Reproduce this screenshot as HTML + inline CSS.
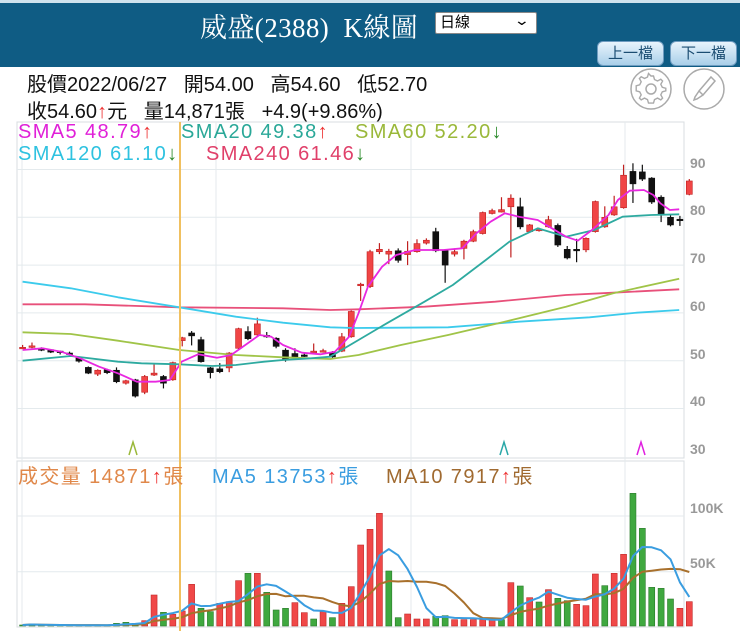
<!DOCTYPE html>
<html><head><meta charset="utf-8">
<style>
*{margin:0;padding:0;box-sizing:border-box}
body{width:740px;height:631px;background:#fff;position:relative;overflow:hidden;font-family:"Liberation Sans","Noto Sans CJK TC",sans-serif}
.top{position:absolute;left:0;top:0;width:740px;height:3px;background:#cfe3ee}
.hdr{position:absolute;left:0;top:3px;width:740px;height:64px;background:#0f5c84}
.title{position:absolute;left:200px;top:3px;font-family:"Liberation Serif","Noto Serif CJK SC",serif;color:#fff;font-size:27px;white-space:nowrap;letter-spacing:0.4px}
.sel{position:absolute;left:435px;top:9px;width:102px;height:22px;background:#fff;border:1px solid #888;border-radius:2px;font-size:15px;padding-left:4px;line-height:20px;color:#000}
.sel span{position:absolute;right:8px;top:-3px;font-size:14px;transform:scaleX(1.4)}
.btn{position:absolute;top:38px;width:67px;height:25px;border-radius:6px;background:linear-gradient(#e8f4fc,#a9cfe9);border:1px solid #6f9cc0;color:#1b4d72;font-size:15px;text-align:center;line-height:23px}
.info{position:absolute;left:27px;font-size:20px;color:#111;white-space:nowrap}
.lg{position:absolute;font-size:20px;white-space:nowrap;letter-spacing:1.4px}
.up{color:#e33}.dn{color:#2a8a2a}
.ax{position:absolute;left:690px;font-size:14px;color:#999;font-weight:bold}
</style></head><body>
<div class="top"></div>
<div class="hdr">
<div class="title">威盛(2388)&nbsp; K線圖</div>
<div class="sel">日線<span>&#8964;</span></div>
<div class="btn" style="left:597px">上一檔</div>
<div class="btn" style="left:670px">下一檔</div>
</div>
<div class="info" style="top:68px">股價2022/06/27 &nbsp; 開54.00 &nbsp; 高54.60 &nbsp; 低52.70</div>
<div class="info" style="top:95px">收54.60<span class="up">↑</span>元 &nbsp; 量14,871張 &nbsp; +4.9(+9.86%)</div>
<svg style="position:absolute;left:629px;top:67px" width="100" height="46">
<circle cx="22" cy="22" r="20" fill="none" stroke="#aaa" stroke-width="1.5"/>
<circle cx="22" cy="22" r="5" fill="none" stroke="#aaa" stroke-width="1.5"/>
<path d="M22 9 l2.5 0 l1 3.5 l3 1.5 l3.3-1.8 l1.8 1.8 l-1.8 3.3 l1.5 3 l3.5 1 l0 2.5 l-3.5 1 l-1.5 3 l1.8 3.3 l-1.8 1.8 l-3.3-1.8 l-3 1.5 l-1 3.5 l-5 0 l-1-3.5 l-3-1.5 l-3.3 1.8 l-1.8-1.8 l1.8-3.3 l-1.5-3 l-3.5-1 l0-5 l3.5-1 l1.5-3 l-1.8-3.3 l1.8-1.8 l3.3 1.8 l3-1.5 l1-3.5 z" fill="none" stroke="#aaa" stroke-width="1.4"/>
<circle cx="75" cy="22" r="20" fill="none" stroke="#aaa" stroke-width="1.5"/>
<path d="M82 10 l4 4 l-12 14 l-4-4 z M70 24 l-4 6 l-1 3 l3-1 l6-4" fill="none" stroke="#aaa" stroke-width="1.5"/>
</svg>
<svg id="c" style="position:absolute;left:0;top:0" width="740" height="631"></svg>
<div class="lg" style="left:18px;top:121px;color:#e020d8">SMA5 48.79<span class="up">↑</span></div>
<div class="lg" style="left:181px;top:121px;color:#2aa898">SMA20 49.38<span class="up">↑</span></div>
<div class="lg" style="left:355px;top:121px;color:#9ab83a">SMA60 52.20<span class="dn">↓</span></div>
<div class="lg" style="left:18px;top:143px;color:#2ec2e0">SMA120 61.10<span class="dn">↓</span></div>
<div class="lg" style="left:206px;top:143px;color:#e0406a">SMA240 61.46<span class="dn">↓</span></div>
<div class="lg" style="left:18px;top:460px;color:#e0884a">成交量 14871<span class="up">↑</span>張</div>
<div class="lg" style="left:212px;top:460px;color:#3a9de0">MA5 13753<span class="up">↑</span>張</div>
<div class="lg" style="left:386px;top:460px;color:#a06a30">MA10 7917<span class="up">↑</span>張</div>
<div class="ax" style="top:155px">90</div><div class="ax" style="top:202px">80</div><div class="ax" style="top:250px">70</div><div class="ax" style="top:298px">60</div><div class="ax" style="top:346px">50</div><div class="ax" style="top:393px">40</div><div class="ax" style="top:441px">30</div>
<div class="ax" style="top:500px">100K</div><div class="ax" style="top:555px">50K</div>
<script>
var s=document.getElementById('c'),h='';
function Y(p){return 217.3+(80-p)*4.78}
function X(i){return 22.6+9.39*i}
h+='<rect x="17" y="122" width="667" height="336" fill="none" stroke="#d8dde0"/>';
h+='<rect x="17" y="461" width="667" height="166" fill="none" stroke="#d8dde0"/>';
[90,80,70,60,50,40].forEach(function(p){h+='<line x1="17" x2="684" y1="'+Y(p)+'" y2="'+Y(p)+'" stroke="#e4eaed"/>'});
[516,571.7].forEach(function(y){h+='<line x1="17" x2="684" y1="'+y+'" y2="'+y+'" stroke="#e4eaed"/>'});
[22,216,411,625].forEach(function(x){h+='<line x1="'+x+'" x2="'+x+'" y1="122" y2="627" stroke="#e4eaed"/>'});
var C=[[52.8,52.8,53.3,52.5],[52.8,53.1,53.8,52.6],[52.5,52.4,52.8,52],[52.3,51.8,52.4,51.6],[52,51.7,52.1,51.3],[51.6,51.4,51.9,51.1],[50.6,49.9,50.8,49.6],[48.6,47.4,48.8,47.2],[47.2,48,48.2,46.8],[48.1,47.5,48.3,47.2],[48,45.6,48.6,45.3],[45.3,45.8,46,45],[46,42.6,46.2,42.3],[43.4,46.7,47,43],[47,47.4,49.2,46.8],[46.7,45.3,47,44.2],[46,49.6,49.8,45.8],[54.2,54.8,55,53],[55.8,55.2,56.2,53.2],[54.4,49.8,55,49.6],[48.5,47.5,48.7,46.3],[48.3,47.7,49.5,47.4],[48.5,51.6,51.8,47.6],[52.6,56.7,56.9,52.4],[56.1,54.6,57.2,54.3],[55.4,57.7,59,55.2],[55.3,55.1,56,54.8],[54.7,53,54.9,52.6],[52.2,50.2,52.6,49.8],[51.5,50.8,52.6,50.6],[51.2,51,51.6,50.8],[51.8,52,53.6,51.4],[51.9,52.1,52.5,51.7],[51.7,50.8,52,50.6],[52,55,55.8,51.8],[55,60.3,60.5,54.8],[66,66,66.3,62.5],[65.5,72.8,73.2,65.2],[72.8,73.3,74.6,72.3],[72.3,72.9,73.4,70.2],[73,71,73.5,70.5],[72.2,72.9,75,70],[72.8,74.5,75.4,72.6],[74.6,75.2,75.6,74.3],[77,73,77.8,72.7],[73,70,73.2,66.3],[72.3,72.8,73.5,71.8],[73.5,75,75.3,71.2],[75,77,77.4,74.8],[76.6,81,81.2,76.4],[80.8,81.4,81.8,80.6],[81.1,81.6,84.2,81],[82.2,84,84.8,71.6],[82.2,78,84.1,77.5],[77,78.4,78.6,76.8],[77.2,77.5,77.8,77],[78,79.5,80.3,77.8],[78.3,74.2,78.7,73.8],[73.3,71.5,74,71.2],[73.3,73.2,75.5,70.6],[73.2,75.6,75.8,72.7],[77,83.3,83.5,76.8],[78,80,82.3,77.8],[80.5,82.2,84.5,80.3],[82,88.8,91,81.8],[89.6,87,91.3,83],[89.5,88,91,87.6],[88.2,83.2,88.4,82.8],[84.2,80.5,84.6,79],[80,78.4,80.6,78.1],[79.6,79.5,80.3,78.2],[84.8,87.6,88,84.6]];
C.forEach(function(c,i){var x=X(i),up=c[1]>=c[0],col=up?'#f04545':'#111',st=up?'#c02020':'#111';
h+='<line x1="'+x+'" x2="'+x+'" y1="'+Y(c[2])+'" y2="'+Y(c[3])+'" stroke="'+st+'" stroke-width="1.2"/>';
var t=Y(Math.max(c[0],c[1])),b=Y(Math.min(c[0],c[1]));if(b-t<1.5)b=t+1.5;
h+='<rect x="'+(x-3)+'" y="'+t+'" width="6" height="'+(b-t)+'" fill="'+col+'" stroke="'+st+'" stroke-width="0.6"/>';});
function pl(pts,col,w){var d=pts.map(function(p){return (p[0]/2.12).toFixed(1)+','+(170+p[1]/3).toFixed(1)}).join(' ');h+='<polyline points="'+d+'" fill="none" stroke="'+col+'" stroke-width="'+(w||1.6)+'" stroke-linejoin="round"/>';}
pl([[48,403],[180,403],[380,412],[600,415],[700,420],[760,418],[900,410],[1050,395],[1200,375],[1300,368],[1440,358]],'#e8507a',1.8);
pl([[48,335],[150,355],[250,382],[380,412],[500,440],[600,458],[700,472],[750,474],[950,472],[1100,455],[1250,442],[1350,428],[1440,420]],'#3ccbec',1.8);
pl([[48,487],[150,492],[250,512],[380,540],[500,555],[600,562],[700,567],[760,555],[850,525],[950,495],[1070,455],[1200,410],[1300,370],[1440,326]],'#a0c448',1.8);
pl([[48,572],[150,558],[250,575],[300,580],[380,583],[450,588],[500,585],[560,575],[600,570],[660,565],[700,560],[760,510],[820,460],[900,395],[960,345],[1030,270],[1080,215],[1140,175],[1200,200],[1260,180],[1320,140],[1380,135],[1440,133]],'#2eaaa0',1.8);
pl([[48,540],[90,535],[130,545],[170,565],[210,590],[250,610],[290,635],[330,635],[360,630],[385,575],[420,553],[460,563],[490,555],[520,525],[550,495],[575,500],[600,525],[640,548],[680,553],[710,545],[740,500],[760,430],[780,350],[810,290],[840,255],[880,240],[940,240],[980,235],[1010,190],[1040,155],[1070,130],[1100,140],[1140,150],[1170,175],[1200,200],[1225,212],[1255,180],[1290,135],[1310,90],[1335,62],[1365,60],[1385,75],[1400,100],[1420,120],[1440,118]],'#e828e0',1.8);
[[133,'#9ab83a'],[504,'#2aa8a8'],[641,'#e020e0']].forEach(function(m){h+='<polyline points="'+(m[0]-4)+',455 '+m[0]+',442 '+(m[0]+4)+',455" fill="none" stroke="'+m[1]+'" stroke-width="1.5"/>'});
var V=[[510,0],[507,0],[511,0],[511,0],[511,0],[511,0],[511,0],[511,0],[511,0],[511,0],[505,0],[502,0],[505,0],[497,1],[420,1],[472,0],[478,1],[468,1],[388,1],[460,0],[470,0],[445,1],[440,1],[377,1],[355,0],[355,1],[412,0],[465,0],[460,0],[443,1],[473,1],[492,0],[470,1],[488,0],[445,1],[395,1],[270,1],[223,1],[175,1],[348,0],[488,0],[477,1],[492,1],[492,1],[484,0],[482,0],[494,1],[494,1],[494,1],[494,1],[494,1],[494,0],[383,1],[393,0],[428,1],[441,0],[404,1],[430,0],[437,0],[448,1],[452,1],[357,1],[392,0],[355,1],[298,1],[115,0],[220,0],[397,0],[400,0],[432,0],[460,1],[440,1]];
var zero=626,vh=V.map(function(v){return (513-v[0])/3});
V.forEach(function(v,i){var x=X(i),hh=vh[i];if(hh<0.8)hh=0.8;
h+='<rect x="'+(x-3)+'" y="'+(zero-hh)+'" width="6" height="'+hh+'" fill="'+(v[1]?'#f04848':'#3fa83f')+'" stroke="'+(v[1]?'#c02828':'#2a7a2a')+'" stroke-width="0.6"/>';});
function ma(n,col){var p=[];for(var i=0;i<vh.length;i++){var a=0,k=0;for(var j=Math.max(0,i-n+1);j<=i;j++){a+=vh[j];k++}p.push(X(i).toFixed(1)+','+(zero-a/k).toFixed(1))}h+='<polyline points="'+p.join(' ')+'" fill="none" stroke="'+col+'" stroke-width="2" stroke-linejoin="round"/>';}
ma(10,'#a8702c');ma(5,'#3a9de0');
h+='<line x1="180" x2="180" y1="122" y2="631" stroke="#f0c060" stroke-width="2"/>';
s.innerHTML=h;
</script>
</body></html>
